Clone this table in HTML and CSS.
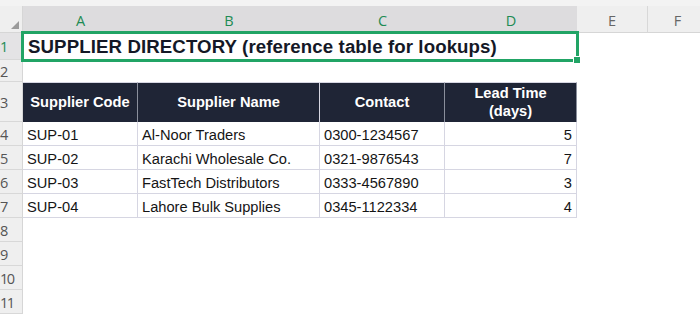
FILE: index.html
```html
<!DOCTYPE html>
<html>
<head>
<meta charset="utf-8">
<link rel="stylesheet" href="styles.css">
</head>
<body>
<div class="topstrip"></div>
<div class="sheet">
  <div class="corner"><span class="tri"></span></div>
  <div class="colhead sel">A</div>
  <div class="colhead sel">B</div>
  <div class="colhead sel">C</div>
  <div class="colhead sel">D</div>
  <div class="colhead">E</div>
  <div class="colhead">F</div>

  <div class="rowhead sel">1</div>
  <div class="title">SUPPLIER DIRECTORY (reference table for lookups)<span class="handle"></span></div>
  <div class="cell"></div>
  <div class="cell"></div>

  <div class="rowhead">2</div>
  <div class="blank"></div>

  <div class="rowhead">3</div>
  <div class="th">Supplier Code</div>
  <div class="th">Supplier Name</div>
  <div class="th">Contact</div>
  <div class="th">Lead Time<br>(days)</div>
  <div class="cell"></div>
  <div class="cell"></div>

  <div class="rowhead">4</div>
  <div class="td">SUP-01</div>
  <div class="td">Al-Noor Traders</div>
  <div class="td">0300-1234567</div>
  <div class="td num">5</div>
  <div class="cell"></div>
  <div class="cell"></div>

  <div class="rowhead">5</div>
  <div class="td">SUP-02</div>
  <div class="td">Karachi Wholesale Co.</div>
  <div class="td">0321-9876543</div>
  <div class="td num">7</div>
  <div class="cell"></div>
  <div class="cell"></div>

  <div class="rowhead">6</div>
  <div class="td">SUP-03</div>
  <div class="td">FastTech Distributors</div>
  <div class="td">0333-4567890</div>
  <div class="td num">3</div>
  <div class="cell"></div>
  <div class="cell"></div>

  <div class="rowhead">7</div>
  <div class="td">SUP-04</div>
  <div class="td">Lahore Bulk Supplies</div>
  <div class="td">0345-1122334</div>
  <div class="td num">4</div>
  <div class="cell"></div>
  <div class="cell"></div>

  <div class="rowhead">8</div>
  <div class="blank"></div>
  <div class="rowhead">9</div>
  <div class="blank"></div>
  <div class="rowhead">10</div>
  <div class="blank"></div>
  <div class="rowhead">11</div>
  <div class="blank"></div>
</div>
</body>
</html>
```

FILE: styles.css
```css
html, body {
  margin: 0;
  padding: 0;
  background: #ffffff;
  width: 700px;
  height: 316px;
  overflow: hidden;
}

.topstrip {
  height: 6px;
  background: #f3f3f3;
}

.sheet {
  display: grid;
  grid-template-columns: 23px 115px 182px 125px 132px 71px 60px;
  grid-template-rows: 27px 27px 22px 40px repeat(4, 24px) repeat(4, 24px);
  font-family: "Liberation Sans", Arial, sans-serif;
  color: #111111;
}

.corner {
  background: #efefef;
  border-right: 1px solid #d6d6d6;
  border-bottom: 1px solid #d6d6d6;
  position: relative;
}

.tri {
  position: absolute;
  right: 3px;
  bottom: 3px;
  width: 0;
  height: 0;
  border-left: 8px solid transparent;
  border-bottom: 8px solid #9b9b9b;
}

.colhead {
  background: #efefef;
  border-right: 1px solid #d8d8d8;
  border-bottom: 1px solid #d6d6d6;
  font-family: "Open Sans", "Noto Sans", sans-serif;
  font-size: 14.5px;
  color: #666666;
  display: flex;
  align-items: center;
  justify-content: center;
  padding-top: 3px;
  box-sizing: border-box;
}

.colhead.sel {
  background: #dddcde;
  color: #1e8b54;
  border-right: none;
}

.rowhead {
  grid-column: 1;
  background: #efefef;
  border-right: 1px solid #d6d6d6;
  border-bottom: 1px solid #d8d8d8;
  font-family: "Open Sans", "Noto Sans", sans-serif;
  font-size: 14.5px;
  color: #555555;
  display: flex;
  align-items: center;
  justify-content: flex-start;
  padding-left: 0;
  padding-top: 1px;
  box-sizing: border-box;
  letter-spacing: -1.5px;
  overflow: hidden;
}

.rowhead.sel {
  color: #1e8b54;
  background: #e4e3e5;
}

.title {
  grid-column: 2 / 6;
  position: relative;
  font-weight: bold;
  font-size: 18.67px;
  letter-spacing: 0.1px;
  display: flex;
  align-items: center;
  padding-left: 5px;
  padding-top: 1px;
  box-sizing: border-box;
  outline: 3px solid #21a465;
  outline-offset: -1px;
  color: #141826;
  white-space: nowrap;
}

.handle {
  position: absolute;
  right: -4px;
  bottom: -4px;
  width: 6px;
  height: 6px;
  background: #21a465;
  border: 1px solid #ffffff;
}

.blank {
  grid-column: 2 / 8;
}

.cell {
  background: #ffffff;
}

.th {
  background: #1f2536;
  color: #ffffff;
  font-weight: bold;
  font-size: 14.67px;
  display: flex;
  align-items: center;
  justify-content: center;
  text-align: center;
  line-height: 18px;
  border-right: 1px solid #8a8f9c;
  border-top: 1px solid #d6d6e2;
  box-sizing: border-box;
  padding-bottom: 1px;
}

.th:nth-child(4n) {
  border-right: 1px solid #d6d6e2;
}

.td {
  font-size: 14.67px;
  color: #151515;
  display: flex;
  align-items: center;
  padding-left: 4px;
  padding-top: 3px;
  border-right: 1px solid #d6d6e2;
  border-bottom: 1px solid #d6d6e2;
  box-sizing: border-box;
  white-space: nowrap;
}

.td.num {
  justify-content: flex-end;
  padding-left: 0;
  padding-right: 4px;
}
```
